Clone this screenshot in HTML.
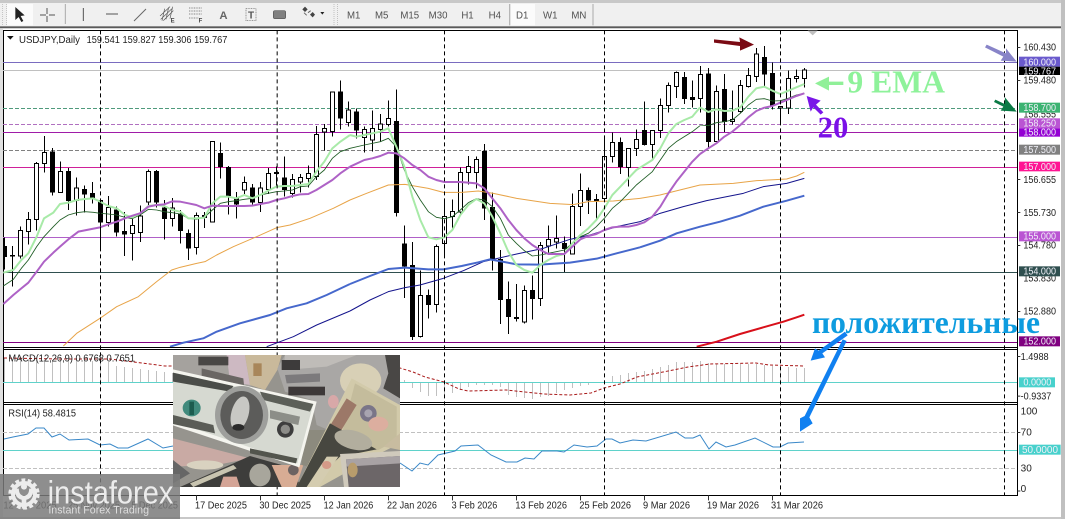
<!DOCTYPE html>
<html><head><meta charset="utf-8"><title>USDJPY Daily</title>
<style>
html,body{margin:0;padding:0;background:#c8c8c8;width:1065px;height:519px;overflow:hidden}
svg{display:block}
text{font-family:"Liberation Sans",sans-serif}
.t{font-size:30px;fill:#222}
.l{font-size:30px;fill:#f0f0f8}
.tb{font-size:29px;fill:#505050}
.s{font-family:"Liberation Serif","Noto Serif CJK SC",serif;font-weight:bold}
</style></head><body>
<svg width="1065" height="519" viewBox="0 0 3195 1557" xmlns="http://www.w3.org/2000/svg">
<defs>
<clipPath id="main"><rect x="9" y="90" width="3042" height="951"/></clipPath>
<clipPath id="img"><rect x="9" y="15" width="681" height="396"/></clipPath>
<filter id="bl"><feGaussianBlur stdDeviation="1"/></filter>
</defs>
<!-- frame -->
<rect width="3195" height="1557" fill="#c8c8c8"/>
<rect x="0" y="9" width="3183" height="72" fill="#f0f0f0"/>
<rect x="0" y="79" width="3183" height="6" fill="#5a5a5a"/>
<rect x="0" y="85" width="3183" height="1466" fill="#fff"/>
<rect x="0" y="85" width="9" height="1466" fill="#e0e0e0"/>
<rect x="9" y="1551" width="3174" height="6" fill="#c8c8c8"/>
<rect x="3183" y="0" width="12" height="1557" fill="#c0c0c0"/>

<!-- toolbar -->
<rect x="21" y="12" width="78" height="64" fill="#fbfbfb"/>
<path d="M8 12v66M20 12v66" stroke="#b0b0b0" stroke-width="2" stroke-dasharray="3 3"/>
<path d="M46 21l0 39 10-9 8 15 6-3-8-15 12-2z" fill="#222"/>
<path d="M141 24v18M141 48v18M120 45h18M147 45h18" stroke="#555" stroke-width="3"/>
<path d="M196 12v60" stroke="#aaa" stroke-width="3"/>
<path d="M250 24v39" stroke="#555" stroke-width="3"/>
<path d="M318 42h36" stroke="#555" stroke-width="3"/>
<path d="M402 63l36-36" stroke="#666" stroke-width="3"/>
<path d="M480 48l30-28M482 58l34-32M490 62l30-30M494 26l-8 36M506 22l-8 36M518 20l-8 36" stroke="#555" stroke-width="2" fill="none"/>
<text x="512" y="68" font-size="18" font-weight="bold" fill="#444">E</text>
<path d="M567 24h40M567 33h40M567 42h40M567 54h30" stroke="#666" stroke-width="2" stroke-dasharray="3 2"/>
<text x="596" y="68" font-size="18" font-weight="bold" fill="#444">F</text>
<text x="658" y="57" font-size="34" font-weight="bold" fill="#666">A</text>
<rect x="738" y="26" width="30" height="36" fill="none" stroke="#666" stroke-width="2" stroke-dasharray="3 2"/>
<text x="744" y="56" font-size="30" font-weight="bold" fill="#555">T</text>
<rect x="820" y="32" width="37" height="24" rx="5" fill="#808080" stroke="#555" stroke-width="2"/>
<path d="M907 28l8-8 8 8-8 8zM930 44l8-8 7 8-7 8z" fill="#444"/>
<path d="M924 38l8-6M912 38l8 8" stroke="#666" stroke-width="3"/>
<path d="M961 36h12l-6 8z" fill="#222"/>
<path d="M1002 12v66M1012 12v66" stroke="#aaa" stroke-width="2" stroke-dasharray="3 3"/>
<text class="tb" x="1041" y="56">M1</text>
<text class="tb" x="1125" y="56">M5</text>
<text class="tb" x="1201" y="56">M15</text>
<text class="tb" x="1286" y="56">M30</text>
<text class="tb" x="1384" y="56">H1</text>
<text class="tb" x="1466" y="56">H4</text>
<rect x="1533" y="12" width="72" height="64" fill="#fbfbfb"/>
<path d="M1529 12v64" stroke="#aaa" stroke-width="3"/>
<text class="tb" x="1548" y="56">D1</text>
<text class="tb" x="1629" y="56">W1</text>
<text class="tb" x="1714" y="56">MN</text>
<path d="M1779 12v64" stroke="#aaa" stroke-width="3"/>

<!-- panel borders -->
<g stroke="#000" stroke-width="3" fill="none">
<path d="M10.5 91.5H3052.5V1486.5H10.5z"/>
<path d="M10.5 1042.5H3052.5M10.5 1048.5H3052.5M10.5 1207.5H3052.5M10.5 1213.5H3052.5"/>
</g>

<g clip-path="url(#main)">
<!-- horizontal levels -->
<g stroke-width="3" fill="none">
<path d="M9 187.5H3051" stroke="#7a6cc0"/>
<path d="M9 211.5H3051" stroke="#c0c0c0"/>
<path d="M9 325.5H3051" stroke="#4f9a7c" stroke-dasharray="12 6"/>
<path d="M9 373.5H3051" stroke="#b070c0" stroke-dasharray="12 6"/>
<path d="M9 397.5H3051" stroke="#a01ca8"/>
<path d="M9 451.5H3051" stroke="#808080" stroke-dasharray="12 6"/>
<path d="M9 502.5H3051" stroke="#d0209a"/>
<path d="M9 712.5H3051" stroke="#b060c8"/>
<path d="M9 817.5H3051" stroke="#2f4f4f"/>
<path d="M9 1027.5H3051" stroke="#800080"/>
</g>
<!-- candles z2 -->
<g transform="translate(0.5,90)" stroke="#000" stroke-width="3" shape-rendering="crispEdges">
<path fill="none" d="M13 622V718M37 648V770M61 590V686M85 546V644M109 396V602M133 318V428M157 354V496M181 394V488M205 414V540M229 442V556M253 466V548M277 456V520M301 510V660M325 498V590M349 530V620M373 546V678M397 560V692M421 526V636M445 418V530M469 420V532M493 510V628M517 504V590M541 540V640M565 598V690M589 548V674M613 546V594M637 334V578M661 338V446M685 408V554M709 486V566M733 440V492M757 462V524M781 456V546M805 414V492M829 410V466M853 380V500M877 432V502M901 432V488M925 406V472M949 288V450M973 282V362M997 184V320M1021 152V298M1045 214V290"/>
<path fill="#fff" d="M55 602h12V678h-12zM79 568h12V604h-12zM103 400h12V568h-12zM127 368h12V400h-12zM175 424h12V488h-12zM223 474h12V512h-12zM319 532h12V578h-12zM391 586h12V610h-12zM415 558h12V608h-12zM439 424h12V516h-12zM511 534h12V566h-12zM583 556h12V652h-12zM631 334h12V576h-12zM727 458h12V480h-12zM775 474h12V518h-12zM799 430h12V478h-12zM871 448h12V490h-12zM895 442h12V456h-12zM919 430h12V446h-12zM943 314h12V440h-12zM967 296h12V306h-12zM991 186h12V304h-12zM1039 240h12V278h-12z"/>
<path fill="#000" d="M7 650h12V680h-12zM31 676h12V678h-12zM151 366h12V486h-12zM199 424h12V512h-12zM247 478h12V492h-12zM271 490h12V504h-12zM295 512h12V576h-12zM343 540h12V606h-12zM367 604h12V612h-12zM463 424h12V516h-12zM487 534h12V566h-12zM535 552h12V602h-12zM559 610h12V654h-12zM607 556h12V562h-12zM655 370h12V410h-12zM679 412h12V496h-12zM703 504h12V522h-12zM751 474h12V516h-12zM823 427h12V430h-12zM847 444h12V478h-12zM1015 186h12V264h-12z"/>
</g>
<!-- candles z3 -->
<g transform="translate(1050.5,90)" stroke="#000" stroke-width="3" shape-rendering="crispEdges">
<path fill="none" d="M19 236V326M43 290V368M67 242V364M91 252V334M115 212V290M139 178V560M163 586V804M187 636V930M211 722V922M235 778V866M259 644V848M283 510V674M307 508V596M331 412V556M355 378V464M379 380V476M403 342V570M427 488V722M451 660V882M475 754V912M499 762V874M523 766V880M547 736V868M571 636V828M595 586V668M619 556V656M643 620V726M667 490V674M691 430V588M715 472V552M739 492V568M763 324V516M787 308V398M811 322V432M835 354V470M859 298V378M883 214V346M907 300V386M931 206V324M955 158V248M979 124V204M1003 126V222M1027 152V232"/>
<path fill="#fff" d="M37 298h12V322h-12zM61 296h12V330h-12zM85 282h12V298h-12zM109 266h12V284h-12zM205 796h12V920h-12zM253 650h12V824h-12zM277 560h12V640h-12zM301 544h12V560h-12zM325 428h12V546h-12zM349 410h12V428h-12zM373 388h12V428h-12zM517 782h12V876h-12zM565 646h12V806h-12zM589 628h12V648h-12zM613 626h12V636h-12zM661 530h12V672h-12zM685 482h12V530h-12zM757 380h12V506h-12zM781 338h12V380h-12zM829 356h12V412h-12zM853 328h12V356h-12zM901 302h12V344h-12zM925 226h12V302h-12zM949 166h12V226h-12zM973 128h12V170h-12z"/>
<path fill="#000" d="M13 246h12V300h-12zM133 274h12V548h-12zM157 642h12V708h-12zM181 706h12V920h-12zM229 796h12V824h-12zM397 364h12V534h-12zM421 532h12V686h-12zM445 688h12V808h-12zM469 808h12V860h-12zM493 862h12V866h-12zM541 782h12V806h-12zM637 640h12V656h-12zM709 482h12V510h-12zM733 508h12V511h-12zM805 338h12V410h-12zM877 302h12V344h-12zM997 142h12V206h-12zM1021 202h12V208h-12z"/>
</g>
<!-- candles z4 -->
<g transform="translate(1920.5,90)" stroke="#000" stroke-width="3" shape-rendering="crispEdges">
<path fill="none" d="M181 108V248M205 114V356M229 166V336M253 132V306M277 182V284M301 150V248M325 114V172M349 54V156M373 48V172M397 98V238M421 234V282M445 122V252M469 118V158M493 114V172"/>
<path fill="#fff" d="M175 134h12V206h-12zM223 184h12V334h-12zM271 268h12V274h-12zM295 166h12V244h-12zM319 136h12V170h-12zM343 72h12V140h-12zM415 229h12V234h-12zM439 146h12V234h-12zM463 140h12V146h-12zM487 120h12V146h-12z"/>
<path fill="#000" d="M199 132h12V334h-12zM247 178h12V274h-12zM367 82h12V132h-12zM391 130h12V226h-12z"/>
</g>
<!-- MAs -->
<g fill="none" stroke-linejoin="round">
<!-- orange -->
<g stroke="#e8a448" stroke-width="3">
<polyline transform="translate(0,90)" points="190,948 230,910 300,865 350,830 415,800 470,755 515,720 540,712 590,700 615,695 650,675 700,650 770,620 830,593 870,585 930,565 1000,535 1050,510"/>
<polyline transform="translate(1050,90)" points="0,510 50,490 115,465 165,463 235,475 280,487 335,487 385,483 430,490 500,505 600,520 670,524 715,515 790,513 870,505"/>
<polyline transform="translate(1920,90)" points="0,505 60,495 100,485 180,465 280,460 350,452 440,447 470,438 493,427"/>
</g>
<!-- navy -->
<g stroke="#14148c" stroke-width="3">
<polyline transform="translate(0,90)" points="800,950 880,920 950,885 1050,843"/>
<polyline transform="translate(1050,90)" points="0,843 60,810 115,785 165,773 210,765 280,745 340,722 400,695 500,672 580,655 660,628 720,615 800,590 870,575"/>
<polyline transform="translate(1920,90)" points="0,575 60,550 130,530 200,512 310,490 370,470 440,460 493,445"/>
</g>
<!-- blue -->
<g stroke="#4668cc" stroke-width="6">
<polyline transform="translate(0,90)" points="510,950 550,938 610,925 650,905 720,880 810,855 860,835 920,820 980,795 1050,762"/>
<polyline transform="translate(1050,90)" points="0,762 60,738 115,717 165,713 235,718 280,718 335,708 385,697 420,688 500,703 570,704 660,698 740,686 800,670 870,652"/>
<polyline transform="translate(1920,90)" points="0,652 60,632 110,610 180,590 240,575 300,557 370,530 440,512 493,497"/>
</g>
<!-- red -->
<polyline transform="translate(1920,90)" stroke="#d8101a" stroke-width="6" points="170,950 230,935 300,912 370,892 430,875 470,862 493,854"/>
<!-- dark green -->
<g stroke="#1e5c24" stroke-width="2.6">
<polyline transform="translate(0,90)" points="10,768 40,748 64,715 85,690 110,650 132,620 160,590 180,570 205,555 230,548 255,545 280,547 300,550 325,552 350,555 375,562 397,566 420,555 445,538 470,540 493,545 517,548 541,552 565,565 589,568 613,562 637,540 661,520 685,515 709,512 733,508 757,505 781,495 805,490 829,485 853,483 877,480 901,470 925,468 949,440 973,420 997,385 1021,365 1050,355"/>
<polyline transform="translate(1050,90)" points="0,355 43,345 91,335 115,325 139,350 163,420 187,470 211,510 235,545 259,562 283,566 307,560 331,540 355,518 379,506 403,510 427,530 451,565 475,615 499,640 523,662 547,678 571,675 595,670 619,665 643,660 667,640 691,620 715,610 739,590 763,565 787,535 811,515 835,490 859,465 883,445 907,425 931,390 955,355 979,335 1003,320 1027,305 1050,287"/>
<polyline transform="translate(1920,90)" points="180,285 205,287 229,278 253,275 277,270 301,250 325,225 349,208 373,206 397,213 421,212 445,205 469,195 493,190"/>
</g>
<!-- light green -->
<g stroke="#a8eaa8" stroke-width="6">
<polyline transform="translate(0,90)" points="10,728 40,720 64,690 85,670 110,620 132,565 160,548 180,522 205,518 230,510 255,507 280,505 300,515 325,528 350,535 375,555 397,562 420,550 445,528 470,525 493,528 517,540 541,545 565,565 589,565 613,563 637,520 661,500 685,500 709,505 733,495 757,505 781,495 805,482 829,470 853,468 877,468 901,465 925,462 949,425 973,395 997,355 1021,335 1050,315"/>
<polyline transform="translate(1050,90)" points="0,315 19,320 43,315 67,310 91,305 115,295 139,350 163,410 187,500 211,570 235,622 259,628 283,622 307,600 331,555 355,525 379,507 403,520 427,560 451,610 475,665 499,705 523,720 547,728 571,705 595,690 619,678 643,672 667,640 691,615 715,595 739,570 763,535 787,495 811,470 835,445 859,420 883,405 907,390 931,355 955,310 979,282 1003,270 1027,260 1050,232"/>
<polyline transform="translate(1920,90)" points="180,232 205,246 229,238 253,243 277,242 301,232 325,200 349,175 373,170 397,182 421,192 445,182 469,172 493,162"/>
</g>
<!-- purple -->
<g stroke="#ae62c6" stroke-width="6">
<polyline transform="translate(0,90)" points="10,822 40,795 64,775 85,758 110,725 132,695 160,668 180,650 205,628 235,605 275,597 300,592 325,583 350,575 375,565 397,557 420,550 445,530 470,525 493,523 517,514 541,515 565,520 589,525 613,535 637,527 661,528 685,528 709,528 733,528 757,527 781,522 805,518 829,510 853,505 877,498 901,493 925,492 949,480 973,465 997,450 1021,430 1050,410"/>
<polyline transform="translate(1050,90)" points="0,410 43,390 67,385 91,378 115,368 139,370 163,385 187,405 211,420 235,440 259,450 283,456 307,456 331,456 355,458 379,460 403,475 427,505 451,535 475,570 499,600 523,625 547,645 571,660 595,672 619,672 643,672 667,650 691,628 715,618 739,612 763,600 787,592 811,590 835,590 859,585 883,577 907,560 931,530 955,490 979,455 1003,425 1027,395 1050,372"/>
<polyline transform="translate(1920,90)" points="180,372 205,355 229,340 253,320 277,305 301,285 325,262 349,243 373,233 397,228 421,218 445,208 469,198 493,190"/>
</g>
</g>
</g>

<!-- MACD histogram, zero, signal -->
<g transform="scale(3)" fill="none">
<path stroke="#c0c0c0" stroke-width="1" d="M4.5 382V358M12.5 382V359M20.5 382V359M28.5 382V360M36.5 382V360M44.5 382V360M52.5 382V360M60.5 382V360M68.5 382V360M76.5 382V360M84.5 382V360M92.5 382V361M100.5 382V361M108.5 382V362M116.5 382V366M124.5 382V367M132.5 382V368M140.5 382V369M148.5 382V370M156.5 382V371M164.5 382V372M172.5 382V373M404.5 382V380M412.5 382V388M420.5 382V392M428.5 382V396M436.5 382V396M444.5 382V395M452.5 382V393M460.5 382V390M468.5 382V387M476.5 382V385M484.5 382V385M492.5 382V385M500.5 382V387M508.5 382V395M516.5 382V397M524.5 382V398M532.5 382V399M540.5 382V397M548.5 382V396M556.5 382V393M564.5 382V390M572.5 382V388M580.5 382V386M588.5 382V385M604.5 382V380M612.5 382V376M620.5 382V375M628.5 382V373M636.5 382V372M644.5 382V371M652.5 382V369M660.5 382V367M668.5 382V365M676.5 382V362M684.5 382V362M692.5 382V362M700.5 382V361M708.5 382V363M716.5 382V364M724.5 382V364M732.5 382V364M740.5 382V364M748.5 382V364M756.5 382V364M764.5 382V365M772.5 382V366M780.5 382V367M788.5 382V367M796.5 382V368M804.5 382V368"/>
<path stroke="#5fd2ca" stroke-width="1" d="M3 382.5H1017M3 450.5H1017"/>
<polyline stroke="#a81818" stroke-width="1" stroke-dasharray="3 2" points="4,358 60,359 110,359 165,366 400,368 413,372 425,377 444,382 459,389 468,391 506,390 544,394 570,395 591,393 604,388 620,384 637,377 663,372 688,367 710,364 756,363 769,365 805,366"/>
<path stroke="#c0c0c0" stroke-width="1" stroke-dasharray="4 2" d="M3 432.5H1017M3 468.5H1017"/>
<polyline stroke="#3a88c8" stroke-width="1" points="4,439 13,437 28,434 36,428 44,428 52,437 60,434 69,440 88,439 100,445 110,444 118,448 128,448 148,439 163,448 173,446"/>
<polyline stroke="#3a88c8" stroke-width="1" points="400,463 412,471 420,463 428,465 438,455 455,451 461,446 478,445 491,455 506,462 517,462 525,458 534,459 542,451 557,451 564,452 574,445 587,447 597,446 606,439 612,439 620,443 633,440 646,441 676,432 685,438 693,438 700,435 709,449 716,442 726,447 735,445 755,438 773,447 780,447 788,443 804,442"/>
</g>

<!-- vertical dashes -->
<path d="M301.5 91V1486M831.5 91V1486M1333.5 91V1486M1813.5 91V1486M2341.5 91V1486M3013.5 91V1486" stroke="#000" stroke-width="3" stroke-dasharray="12 9" fill="none"/>

<!-- right axis ticks -->
<g stroke="#333" stroke-width="3">
<path d="M3052 142.5h9M3052 241.5h9M3052 538.5h9M3052 637.5h9M3052 736.5h9M3052 934.5h9M3052 1069.5h9M3052 1188.5h9M3052 1297.5h9M3052 1473h9"/>
<path d="M589.5 1486v15M781.5 1486v15M973.5 1486v15M1165.5 1486v15M1357.5 1486v15M1549.5 1486v15M1741.5 1486v15M1933.5 1486v15M2125.5 1486v15M2317.5 1486v15"/>
</g>
<!-- axis text -->
<text class="t" x="3070" y="152" textLength="98" lengthAdjust="spacingAndGlyphs">160.430</text>
<text class="t" x="3070" y="251" textLength="98" lengthAdjust="spacingAndGlyphs">159.480</text>
<text class="t" x="3070" y="352" textLength="98" lengthAdjust="spacingAndGlyphs">158.555</text>
<text class="t" x="3070" y="549" textLength="98" lengthAdjust="spacingAndGlyphs">156.655</text>
<text class="t" x="3070" y="648" textLength="98" lengthAdjust="spacingAndGlyphs">155.730</text>
<text class="t" x="3070" y="746" textLength="98" lengthAdjust="spacingAndGlyphs">154.780</text>
<text class="t" x="3070" y="845" textLength="98" lengthAdjust="spacingAndGlyphs">153.830</text>
<text class="t" x="3070" y="944" textLength="98" lengthAdjust="spacingAndGlyphs">152.880</text>
<text class="t" x="3062" y="1080" textLength="84" lengthAdjust="spacingAndGlyphs">1.4988</text>
<text class="t" x="3062" y="1198" textLength="92" lengthAdjust="spacingAndGlyphs">-0.9337</text>
<text class="t" x="3062" y="1243">100</text>
<text class="t" x="3062" y="1307">70</text>
<text class="t" x="3062" y="1415">30</text>
<text class="t" x="3062" y="1476">0</text>
<!-- price labels -->
<g>
<rect x="3057" y="170" width="123" height="30" fill="#6a5acd"/><text class="l" x="3070" y="196" textLength="98" lengthAdjust="spacingAndGlyphs">160.000</text>
<rect x="3057" y="200" width="123" height="25" fill="#000"/><text class="l" x="3070" y="223" textLength="98" lengthAdjust="spacingAndGlyphs">159.767</text>
<rect x="3057" y="308" width="123" height="30" fill="#3cb371"/><text class="l" x="3070" y="333" textLength="98" lengthAdjust="spacingAndGlyphs">158.700</text>
<rect x="3057" y="355" width="123" height="30" fill="#ba55d3"/><text class="l" x="3070" y="380" textLength="98" lengthAdjust="spacingAndGlyphs">158.250</text>
<rect x="3057" y="385" width="123" height="25" fill="#9400d3"/><text class="l" x="3070" y="406" textLength="98" lengthAdjust="spacingAndGlyphs">158.000</text>
<rect x="3057" y="434" width="123" height="30" fill="#808080"/><text class="l" x="3070" y="459" textLength="98" lengthAdjust="spacingAndGlyphs">157.500</text>
<rect x="3057" y="485" width="123" height="29" fill="#ff1493"/><text class="l" x="3070" y="510" textLength="98" lengthAdjust="spacingAndGlyphs">157.000</text>
<rect x="3057" y="694" width="123" height="30" fill="#ba55d3"/><text class="l" x="3070" y="719" textLength="98" lengthAdjust="spacingAndGlyphs">155.000</text>
<rect x="3057" y="799" width="123" height="30" fill="#2f4f4f"/><text class="l" x="3070" y="824" textLength="98" lengthAdjust="spacingAndGlyphs">154.000</text>
<rect x="3057" y="1009" width="123" height="30" fill="#800080"/><text class="l" x="3070" y="1034" textLength="98" lengthAdjust="spacingAndGlyphs">152.000</text>
<rect x="3057" y="1132" width="108" height="30" fill="#48d1cc"/><text class="l" x="3070" y="1157" textLength="84" lengthAdjust="spacingAndGlyphs">0.0000</text>
<rect x="3057" y="1334" width="125" height="30" fill="#48d1cc"/><text class="l" x="3066" y="1359" textLength="108" lengthAdjust="spacingAndGlyphs">50.0000</text>
</g>

<!-- legends -->
<path d="M21 108h20l-10 11z" fill="#111"/>
<text class="t" x="57" y="129" textLength="183" lengthAdjust="spacingAndGlyphs">USDJPY,Daily</text>
<text class="t" x="260" y="129" textLength="422" lengthAdjust="spacingAndGlyphs">159.541 159.827 159.306 159.767</text>
<text class="t" x="25" y="1085" textLength="380" lengthAdjust="spacingAndGlyphs">MACD(12,26,9) 0.6768 0.7651</text>
<text class="t" x="25" y="1250" textLength="203" lengthAdjust="spacingAndGlyphs">RSI(14) 58.4815</text>

<!-- date labels -->
<g>
<text class="t" x="10" y="1525" textLength="160" lengthAdjust="spacingAndGlyphs">12 Nov 2025</text>
<text class="t" x="204" y="1525" textLength="156" lengthAdjust="spacingAndGlyphs">25 Nov 2025</text>
<text class="t" x="394" y="1525" textLength="140" lengthAdjust="spacingAndGlyphs">5 Dec 2025</text>
<text class="t" x="585" y="1525" textLength="156" lengthAdjust="spacingAndGlyphs">17 Dec 2025</text>
<text class="t" x="778" y="1525" textLength="155" lengthAdjust="spacingAndGlyphs">30 Dec 2025</text>
<text class="t" x="971" y="1525" textLength="149" lengthAdjust="spacingAndGlyphs">12 Jan 2026</text>
<text class="t" x="1161" y="1525" textLength="150" lengthAdjust="spacingAndGlyphs">22 Jan 2026</text>
<text class="t" x="1355" y="1525" textLength="137" lengthAdjust="spacingAndGlyphs">3 Feb 2026</text>
<text class="t" x="1546" y="1525" textLength="155" lengthAdjust="spacingAndGlyphs">13 Feb 2026</text>
<text class="t" x="1738" y="1525" textLength="155" lengthAdjust="spacingAndGlyphs">25 Feb 2026</text>
<text class="t" x="1929" y="1525" textLength="141" lengthAdjust="spacingAndGlyphs">9 Mar 2026</text>
<text class="t" x="2121" y="1525" textLength="156" lengthAdjust="spacingAndGlyphs">19 Mar 2026</text>
<text class="t" x="2313" y="1525" textLength="156" lengthAdjust="spacingAndGlyphs">31 Mar 2026</text>
</g>

<!-- money photo -->
<g transform="translate(510,1050)" clip-path="url(#img)">
<g filter="url(#bl)">
<rect x="9" y="15" width="681" height="396" fill="#96948e"/>
<!-- top-left yen -->
<polygon points="9,15 230,15 245,110 9,70" fill="#a5a29e"/>
<polygon points="170,15 225,15 240,105 180,95" fill="#cdb9c2"/>
<rect x="85" y="20" width="90" height="26" fill="#4a4644"/>
<polygon points="95,55 220,85 222,105 95,80" fill="#6a6664"/>
<!-- tan -->
<polygon points="225,15 335,15 322,60 285,120 240,105" fill="#c9b99b"/>
<rect x="250" y="40" width="25" height="38" fill="#a8865a"/>
<!-- right yen -->
<polygon points="322,55 345,15 690,15 690,170 545,85 475,240 440,225 425,150 345,125" fill="#a9a7a5"/>
<polygon points="345,15 560,15 470,50 340,60" fill="#bfbcb8"/>
<ellipse cx="572" cy="92" rx="62" ry="52" fill="#d8d0b6"/>
<polygon points="645,15 690,15 690,145 640,115 655,70" fill="#4a4644"/>
<rect x="335" y="30" width="55" height="30" fill="#3e3a3a"/>
<rect x="355" y="110" width="110" height="26" fill="#3c3838"/>
<ellipse cx="490" cy="155" rx="16" ry="20" fill="#d8a8a8"/>
<polygon points="345,75 450,70 450,95 350,100" fill="#7c7a7c"/>
<!-- lower-left notes -->
<polygon points="9,265 240,325 140,345 9,350" fill="#c9aaa4"/>
<ellipse cx="105" cy="345" rx="55" ry="14" fill="#d9d2c0"/>
<polygon points="9,330 60,370 9,400" fill="#666"/>
<polygon points="30,411 240,318 335,345 400,411" fill="#3e3e3a"/>
<polygon points="60,400 190,345 200,355 70,411" fill="#c8c4b0"/>
<polygon points="160,380 200,380 210,411 150,411" fill="#d4a496"/>
<ellipse cx="270" cy="375" rx="32" ry="34" fill="#a8a69c"/>
<polygon points="305,345 400,345 378,411 335,411" fill="#d8ac94"/>
<circle cx="370" cy="360" r="16" fill="#6c6462"/>
<polygon points="400,240 470,240 415,350 395,345" fill="#8c8a7e"/>
<!-- $100 -->
<polygon points="9,58 440,155 388,352 9,226" fill="#f4f4ee"/>
<polygon points="9,68 430,162 382,340 9,214" fill="#d6d9d1"/>
<polygon points="9,68 190,108 180,125 9,95" fill="#4c4e48"/>
<polygon points="270,125 430,162 420,185 280,150" fill="#5c5e58"/>
<polygon points="9,195 130,225 135,250 9,222" fill="#5a5c56"/>
<polygon points="240,295 382,325 378,340 240,310" fill="#52544e"/>
<ellipse cx="215" cy="195" rx="80" ry="87" fill="#9e9f9c"/>
<ellipse cx="215" cy="195" rx="64" ry="72" fill="#5c5c5a"/>
<ellipse cx="210" cy="190" rx="26" ry="52" transform="rotate(15 210 190)" fill="#c8c8c4"/>
<ellipse cx="205" cy="232" rx="18" ry="10" fill="#2c2c2a"/>
<circle cx="346" cy="238" r="25" fill="#3e3e3c"/>
<circle cx="346" cy="238" r="14" fill="#8c8c88"/>
<ellipse cx="65" cy="174" rx="27" ry="25" fill="#3f8a7c"/>
<rect x="58" y="155" width="14" height="40" fill="#1f5c50"/>
<polygon points="300,180 390,200 385,225 300,205" fill="#8c8e88"/>
<!-- $10 -->
<polygon points="545,85 690,165 690,280 640,305 450,411 380,411" fill="#d2caaa"/>
<polygon points="555,100 680,170 680,270 625,300 500,310" fill="#c4bc9c"/>
<polygon points="530,145 560,165 505,255 475,235" fill="#9c7868"/>
<circle cx="595" cy="190" r="25" fill="#7a7488"/>
<circle cx="595" cy="190" r="12" fill="#a8a4b0"/>
<ellipse cx="625" cy="222" rx="30" ry="22" fill="#dcae9f"/>
<polygon points="480,220 620,298 510,320 415,411 380,411" fill="#46463f"/>
<ellipse cx="550" cy="270" rx="58" ry="28" transform="rotate(15 550 270)" fill="#b2ae9e"/>
<polygon points="470,320 505,320 445,411 410,411" fill="#d4ccb0"/>
<ellipse cx="470" cy="345" rx="14" ry="12" fill="#d49a88"/>
<polygon points="640,290 690,250 690,300" fill="#c8bca0"/>
<!-- lower right note -->
<polygon points="510,312 690,303 690,411 522,411" fill="#d0cabc"/>
<polygon points="528,328 690,318 690,411 536,411" fill="#6c6668"/>
<polygon points="528,328 690,318 690,340 530,350" fill="#a8a2a4"/>
<ellipse cx="548" cy="360" rx="15" ry="22" fill="#b89c6c"/>
</g>
</g>

<!-- annotations -->
<g transform="translate(1920,90)">
<polygon points="222,28 300,36 298,22 342,44 300,62 300,48 222,38" fill="#7a0a14"/>
<polygon points="1035,52 1040,44 1098,70 1098,55 1130,95 1082,92 1090,80" fill="#8884c8"/>
<polygon points="1062,216 1066,209 1094,222 1095,202 1130,245 1082,242 1090,230" fill="#0a7a45"/>
<polygon points="525,160 567,140 567,155 610,155 610,165 567,165 567,182" fill="#90f098"/>
<polygon points="500,198 542,212 528,224 550,247 542,254 520,232 512,245" fill="#7a16e8"/>
</g>
<text class="s" x="2542" y="278" font-size="96" fill="#8ef29a" textLength="293" lengthAdjust="spacingAndGlyphs">9 EMA</text>
<text class="s" x="2453" y="412" font-size="92" fill="#7a10e8" textLength="92" lengthAdjust="spacingAndGlyphs">20</text>
<text class="s" x="2436" y="999" font-size="96" fill="#0e9cdf" textLength="684" lengthAdjust="spacingAndGlyphs">положительные</text>
<g transform="translate(2340,900)">
<polygon points="195,95 203,106 127,160 135,172 92,182 105,145 116,152" fill="#1080f0"/>
<polygon points="188,118 200,123 88,352 98,370 60,395 60,355 74,348" fill="#1080f0"/>
</g>
<path d="M2423 92h30l-15 14z" fill="#c0c0c0"/>

<!-- logo -->
<rect x="0" y="1422" width="540" height="135" fill="#7a7a7a" fill-opacity="0.85"/>
<g transform="translate(0,1410)">
<circle cx="72" cy="72" r="40" fill="none" stroke="#ececec" stroke-width="14" stroke-dasharray="11 7"/>
<circle cx="72" cy="72" r="33" fill="none" stroke="#ececec" stroke-width="12"/>
<path d="M50 56q0 26 22 28q22-2 22-28" fill="none" stroke="#ececec" stroke-width="13"/>
<rect x="65" y="78" width="14" height="38" fill="#ececec"/>
<circle cx="72" cy="50" r="9" fill="#ececec"/>
<text x="143" y="100" font-size="96" fill="#ececec" textLength="377" lengthAdjust="spacingAndGlyphs">instaforex</text>
<text x="145" y="130" font-size="34" fill="#dedede" textLength="302" lengthAdjust="spacingAndGlyphs">Instant Forex Trading</text>
</g>
</svg>
</body></html>
